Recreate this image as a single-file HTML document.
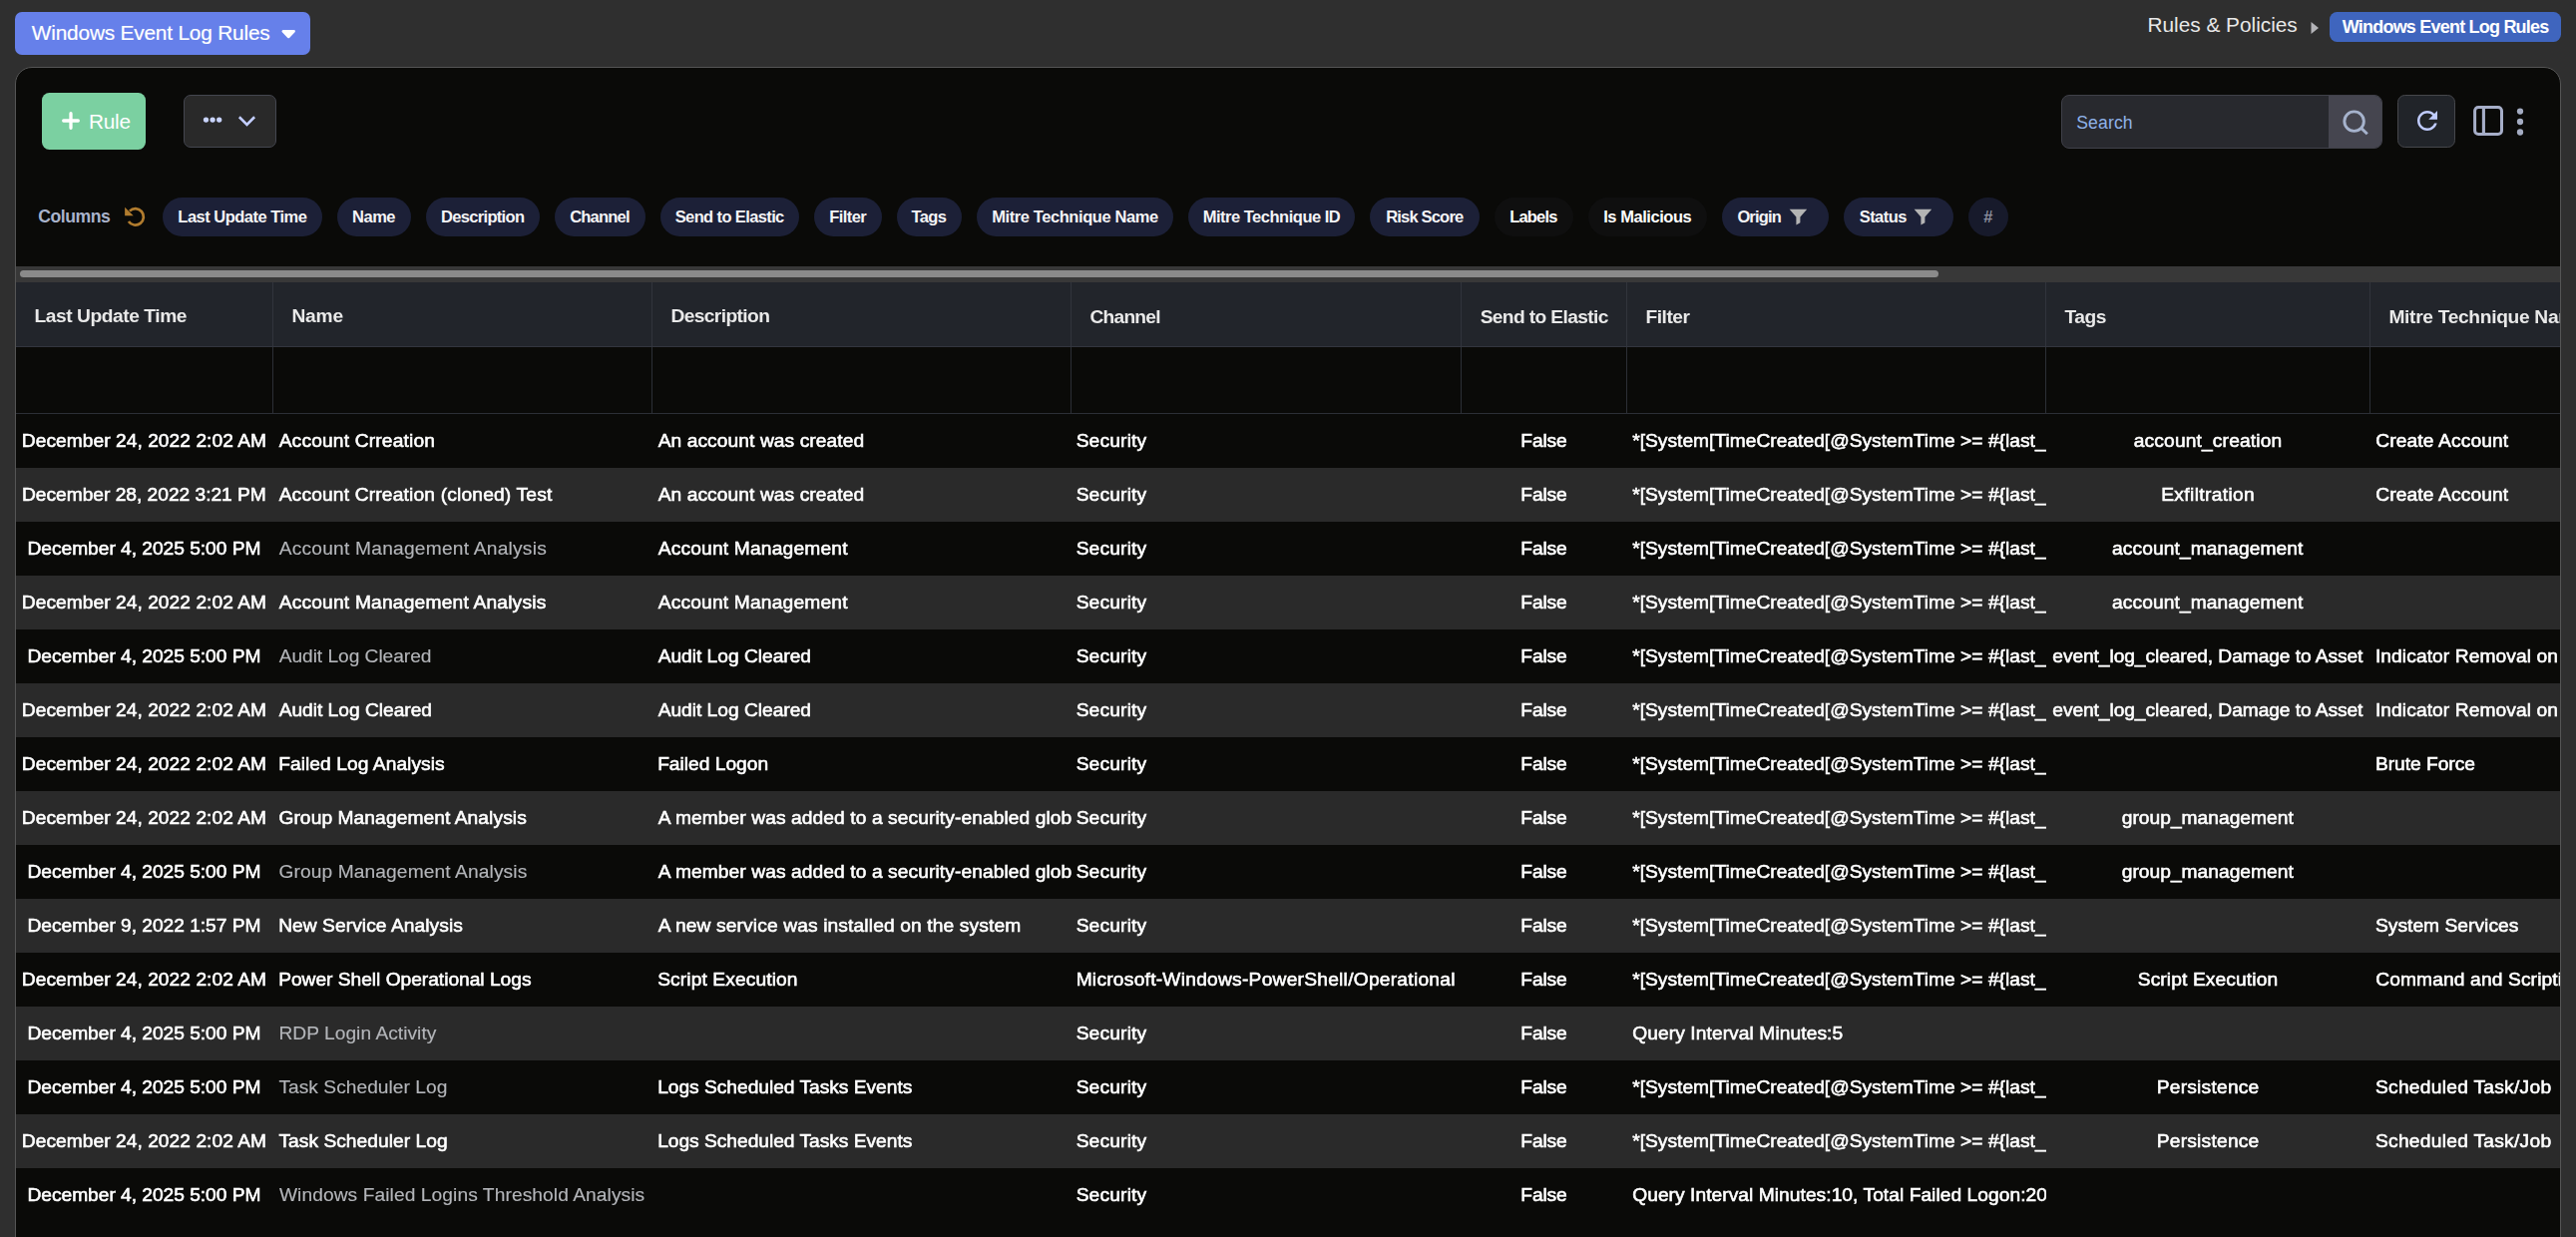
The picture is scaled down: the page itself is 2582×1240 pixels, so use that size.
<!DOCTYPE html><html lang='en'><head><meta charset='utf-8'><title>Windows Event Log Rules</title><style>
*{box-sizing:border-box;margin:0;padding:0}
html,body{width:2582px;height:1240px;overflow:hidden;background:#2f2f2f}
body{font-family:"Liberation Sans",sans-serif;color:#fff;position:relative;-webkit-font-smoothing:antialiased}
.abs{position:absolute}
.nw{white-space:pre}
.titlebtn{left:15px;top:12px;width:296px;height:43px;border-radius:7px;background:#6680ea;}
.titlebtn span{position:absolute;left:16.8px;top:-1.2px;line-height:43px;-webkit-text-stroke:0.2px #fff;font-size:20.8px;color:#fff}
.titlebtn svg{position:absolute;left:265.6px;top:16.4px}
.crumb{left:2154px;top:6px;height:38px;line-height:38px;font-size:20.8px;color:#e8e8e8}
.crumbsep{left:2316px;top:21px}
.badge{left:2335px;top:12px;width:232px;height:30px;border-radius:7.5px;background:#3f65be;font-weight:700;font-size:18px;line-height:30px;text-align:left;color:#fff;padding-top:0}
.card{left:15px;top:67px;width:2552px;height:1300px;border:1px solid #555;border-radius:17px;background:#0a0a08;overflow:hidden}
.rulebtn{left:26px;top:25px;width:104.3px;height:57.3px;border-radius:7.5px;background:#7bd0a1}
.rulebtn span{position:absolute;left:48.6px;top:0.4px;line-height:58px;font-size:20.8px;color:#fff}
.rulebtn svg{position:absolute;left:18.8px;top:18.1px}
.morebtn{left:168px;top:27px;width:93px;height:53px;border-radius:7px;background:#292929;border:1px solid #44464f}
.search{left:2050px;top:27px;width:322px;height:54px;border-radius:8px;background:#28292e;border:1px solid #404149;overflow:hidden}
.search span{position:absolute;left:15px;top:0;line-height:54px;font-size:17.6px;color:#8fb2e8}
.search .sbtn{position:absolute;right:-1px;top:-1px;width:54px;height:54px;background:#45454f}
.refresh{left:2387px;top:27px;width:58px;height:53px;border-radius:7.5px;background:#212429;border:1px solid #46474b}
.colslabel{left:23px;top:130px;height:39px;line-height:39px;font-size:17.6px;font-weight:700;color:#a9b3cb}
.chip{top:130px;height:39px;border-radius:20px;background:#1c2037;color:#f4f4f6;font-size:16.5px;font-weight:700;line-height:39px;padding-left:15.7px;white-space:pre}
.chip.off{background:#0f0f0f;color:#fff}
.chip.hash{background:#171a2b;color:#8b8e9d;padding-left:15.3px}
.sbtrack{left:0;top:199px;width:2550px;height:16px;background:#383838}
.sbthumb{left:4px;top:4px;width:1922.6px;height:7px;border-radius:4px;background:#8a8a8a}
.tbl{left:0;top:215px;width:2550px;height:1100px;overflow:hidden;will-change:transform}
.thead{left:0;top:0;height:65px;width:2700px;background:#22252b;display:flex;border-bottom:1px solid #33363e}
.th{height:64px;line-height:64px;padding-left:18.4px;font-size:19.2px;font-weight:700;color:#e9e9e9;border-right:1px solid #31343c;white-space:pre;overflow:hidden;flex:none}
.frow{left:0;top:65px;height:67px;width:2700px;display:flex;border-bottom:1px solid #2c2f36}
.fc{height:66px;border-right:1px solid #2c2f36;flex:none}
.tr{left:0;height:54px;width:2700px;display:flex}
.tr.alt{background:#2a2a2a}
.td{height:54px;line-height:54px;font-size:19.2px;padding:0 0 0 5.4px;white-space:pre;overflow:hidden;flex:none;color:#fff;-webkit-text-stroke:0.6px #fff}
.td.m{color:#b3b5b9;-webkit-text-stroke:0.15px #b3b5b9}
</style></head><body>
<div class='abs titlebtn'><span class='nw' style='left:16.80px;letter-spacing:-0.173px'>Windows Event Log Rules</span><svg width='17' height='12' viewBox='0 0 17 12'><path d='M2.7 3.3 L13.7 3.3 L8.2 9.1 Z' fill='#fff' stroke='#fff' stroke-width='2.4' stroke-linejoin='round'/></svg></div>
<div class='abs crumb nw' style='left:2152.45px;letter-spacing:0.003px'>Rules &amp; Policies</div>
<svg class='abs crumbsep' width='9' height='14' viewBox='0 0 9 14'><path d='M0.5 1 L8 7 L0.5 13 Z' fill='#b4b4b8'/></svg>
<div class='abs badge nw' style='padding-left:12.80px;letter-spacing:-0.791px'>Windows Event Log Rules</div>
<div class='abs card'>
<div class='abs rulebtn'><svg width='20' height='20' viewBox='0 0 20 20'><path d='M10 2.7v14.6M2.7 10h14.6' stroke='#fff' stroke-width='3.3' stroke-linecap='round' fill='none'/></svg><span class='nw' style='left:47.05px;letter-spacing:-0.267px'>Rule</span></div>
<div class='abs morebtn'><svg class='abs' style='left:0;top:0' width='91' height='51' viewBox='0 0 91 51'><circle cx='21.5' cy='24.1' r='2.65' fill='#c9d4ff'/><circle cx='28.1' cy='24.1' r='2.65' fill='#c9d4ff'/><circle cx='34.7' cy='24.1' r='2.65' fill='#c9d4ff'/><path d='M55.8 22.2 L62.5 28.9 L69.2 22.2' fill='none' stroke='#c3ceff' stroke-width='2.6' stroke-linecap='square' stroke-linejoin='miter'/></svg></div>
<div class='abs search'><span class='nw' style='left:14.25px;letter-spacing:0.13px'>Search</span><div class='sbtn'><svg class='abs' style='left:0;top:0' width='54' height='54' viewBox='0 0 54 54'><circle cx='25.6' cy='26.6' r='9.75' fill='none' stroke='#a6b3cd' stroke-width='2.9'/><path d='M32.6 33.4 L38.8 39.2' stroke='#a6b3cd' stroke-width='2.9' stroke-linecap='butt'/></svg></div></div>
<div class='abs refresh'><svg class='abs' style='left:13.7px;top:10.1px' width='30' height='30' viewBox='0 0 24 24'><path fill='#c0ccff' d='M17.65 6.35C16.2 4.9 14.21 4 12 4c-4.42 0-7.99 3.58-7.99 8s3.57 8 7.99 8c3.73 0 6.84-2.55 7.73-6h-2.08c-.82 2.33-3.04 4-5.65 4-3.31 0-6-2.69-6-6s2.69-6 6-6c1.66 0 3.14.69 4.22 1.78L13 11h7V4l-2.35 2.35z'/></svg></div>
<svg class='abs' style='left:2460px;top:36px' width='36' height='36' viewBox='0 0 36 36'><rect x='4.6' y='3.4' width='26.9' height='27.1' rx='3.6' fill='none' stroke='#a6aec8' stroke-width='3'/><path d='M13.4 3.4v27.1' stroke='#a6aec8' stroke-width='3.1'/></svg>
<svg class='abs' style='left:2504px;top:38px' width='12' height='34' viewBox='0 0 12 34'><circle cx='6' cy='5.6' r='3.15' fill='#a4acc2'/><circle cx='6' cy='16' r='3.15' fill='#a4acc2'/><circle cx='6' cy='26.5' r='3.15' fill='#a4acc2'/></svg>
<div class='abs colslabel nw' style='left:22.15px;letter-spacing:-0.442px'>Columns</div>
<svg class='abs' style='left:104px;top:133px' width='32' height='32' viewBox='0 0 32 32'><path d='M9.9 10.6 A8.2 8.2 0 1 1 8.9 21.0' fill='none' stroke='#b17c2e' stroke-width='2.7'/><path d='M5.1 6.7 V15.2 H13.7 Z' fill='#b17c2e'/></svg>
<div class='abs chip' style='left:147.0px;width:159.9px;padding-left:15.36px;letter-spacing:-0.517px'>Last Update Time</div>
<div class='abs chip' style='left:321.8px;width:73.9px;padding-left:15.29px;letter-spacing:-0.5px'>Name</div>
<div class='abs chip' style='left:411.0px;width:113.8px;padding-left:15.01px;letter-spacing:-0.675px'>Description</div>
<div class='abs chip' style='left:539.8px;width:91.0px;padding-left:15.38px;letter-spacing:-0.792px'>Channel</div>
<div class='abs chip' style='left:645.9px;width:139.1px;padding-left:14.85px;letter-spacing:-0.625px'>Send to Elastic</div>
<div class='abs chip' style='left:799.9px;width:68.1px;padding-left:15.46px;letter-spacing:-0.6px'>Filter</div>
<div class='abs chip' style='left:882.9px;width:64.8px;padding-left:14.53px;letter-spacing:-0.583px'>Tags</div>
<div class='abs chip' style='left:963.1px;width:196.8px;padding-left:15.18px;letter-spacing:-0.421px'>Mitre Technique Name</div>
<div class='abs chip' style='left:1175.0px;width:167.4px;padding-left:14.67px;letter-spacing:-0.485px'>Mitre Technique ID</div>
<div class='abs chip' style='left:1357.4px;width:109.3px;padding-left:15.76px;letter-spacing:-0.806px'>Risk Score</div>
<div class='abs chip off' style='left:1481.9px;width:78.7px;padding-left:15.29px;letter-spacing:-0.8px'>Labels</div>
<div class='abs chip off' style='left:1576.0px;width:118.8px;padding-left:15.22px;letter-spacing:-0.455px'>Is Malicious</div>
<div class='abs chip' style='left:1709.7px;width:107.3px;padding-left:15.70px;letter-spacing:-0.85px'>Origin<svg style='position:absolute;top:11px;left:67.4px' width='19' height='17' viewBox='0 0 19 17'><path d='M0.6 0.8 H18.2 L11.4 8.6 V14.2 L7.4 16.4 V8.6 Z' fill='#b4b4b4'/></svg></div>
<div class='abs chip' style='left:1832.0px;width:110.0px;padding-left:15.70px;letter-spacing:-0.55px'>Status<svg style='position:absolute;top:11px;left:70.1px' width='19' height='17' viewBox='0 0 19 17'><path d='M0.6 0.8 H18.2 L11.4 8.6 V14.2 L7.4 16.4 V8.6 Z' fill='#b4b4b4'/></svg></div>
<div class='abs chip hash' style='left:1956.9px;width:40.3px;letter-spacing:0'>#</div>
<div class='abs sbtrack'><div class='abs sbthumb'></div></div>
<div class='abs tbl'>
<div class='abs thead'>
<div class='th' style='width:258px;padding-top:1.7px;padding-left:18.40px;letter-spacing:-0.433px'>Last Update Time</div>
<div class='th' style='width:380px;padding-top:1.7px;padding-left:18.40px;letter-spacing:-0.167px'>Name</div>
<div class='th' style='width:420px;padding-top:1.7px;padding-left:18.40px;letter-spacing:-0.6px'>Description</div>
<div class='th' style='width:391px;padding-top:2.5px;padding-left:18.40px;letter-spacing:-0.75px'>Channel</div>
<div class='th' style='width:166px;padding-top:2.5px;padding-left:18.65px;letter-spacing:-0.625px'>Send to Elastic</div>
<div class='th' style='width:420px;padding-top:2.5px;padding-left:18.40px;letter-spacing:-0.45px'>Filter</div>
<div class='th' style='width:325px;padding-top:2.5px;padding-left:18.40px;letter-spacing:-0.417px'>Tags</div>
<div class='th' style='width:260px;padding-top:2.5px;padding-left:18.40px;letter-spacing:-0.316px'>Mitre Technique Name</div>
</div><div class='abs frow'>
<div class='fc' style='width:258px'></div>
<div class='fc' style='width:380px'></div>
<div class='fc' style='width:420px'></div>
<div class='fc' style='width:391px'></div>
<div class='fc' style='width:166px'></div>
<div class='fc' style='width:420px'></div>
<div class='fc' style='width:325px'></div>
<div class='fc' style='width:260px'></div>
</div>
<div class='abs tr' style='top:132px'>
<div class='td' style='width:258px;padding-left:5.78px;letter-spacing:0.042px'>December 24, 2022 2:02 AM</div>
<div class='td' style='width:380px;padding-left:5.65px;letter-spacing:0.172px'>Account Crreation</div>
<div class='td' style='width:420px;padding-left:5.65px;letter-spacing:0.083px'>An account was created</div>
<div class='td' style='width:391px;padding-left:4.65px;letter-spacing:0.179px'>Security</div>
<div class='td' style='width:166px;padding-left:59.32px;letter-spacing:-0.125px'>False</div>
<div class='td' style='width:420px;padding-left:5.20px;letter-spacing:0.018px'>*[System[TimeCreated[@SystemTime &gt;= #{last_</div>
<div class='td' style='width:325px;padding-left:87.80px;letter-spacing:0.15px'>account_creation</div>
<div class='td' style='width:260px;padding-left:5.20px;letter-spacing:0.135px'>Create Account</div>
</div>
<div class='abs tr alt' style='top:186px'>
<div class='td' style='width:258px;padding-left:6.02px;letter-spacing:-0.021px'>December 28, 2022 3:21 PM</div>
<div class='td' style='width:380px;padding-left:5.65px;letter-spacing:0.175px'>Account Crreation (cloned) Test</div>
<div class='td' style='width:420px;padding-left:5.65px;letter-spacing:0.083px'>An account was created</div>
<div class='td' style='width:391px;padding-left:4.65px;letter-spacing:0.179px'>Security</div>
<div class='td' style='width:166px;padding-left:59.32px;letter-spacing:-0.125px'>False</div>
<div class='td' style='width:420px;padding-left:5.20px;letter-spacing:0.018px'>*[System[TimeCreated[@SystemTime &gt;= #{last_</div>
<div class='td' style='width:325px;padding-left:115.21px;letter-spacing:0.364px'>Exfiltration</div>
<div class='td' style='width:260px;padding-left:5.20px;letter-spacing:0.135px'>Create Account</div>
</div>
<div class='abs tr' style='top:240px'>
<div class='td' style='width:258px;padding-left:11.51px;letter-spacing:-0.033px'>December 4, 2025 5:00 PM</div>
<div class='td m' style='width:380px;padding-left:5.65px;letter-spacing:0.221px'>Account Management Analysis</div>
<div class='td' style='width:420px;padding-left:5.65px;letter-spacing:0.191px'>Account Management</div>
<div class='td' style='width:391px;padding-left:4.65px;letter-spacing:0.179px'>Security</div>
<div class='td' style='width:166px;padding-left:59.32px;letter-spacing:-0.125px'>False</div>
<div class='td' style='width:420px;padding-left:5.20px;letter-spacing:0.018px'>*[System[TimeCreated[@SystemTime &gt;= #{last_</div>
<div class='td' style='width:325px;padding-left:66.09px;letter-spacing:0.088px'>account_management</div>
<div class='td' style='width:260px'></div>
</div>
<div class='abs tr alt' style='top:294px'>
<div class='td' style='width:258px;padding-left:5.78px;letter-spacing:0.042px'>December 24, 2022 2:02 AM</div>
<div class='td' style='width:380px;padding-left:5.65px;letter-spacing:0.202px'>Account Management Analysis</div>
<div class='td' style='width:420px;padding-left:5.65px;letter-spacing:0.191px'>Account Management</div>
<div class='td' style='width:391px;padding-left:4.65px;letter-spacing:0.179px'>Security</div>
<div class='td' style='width:166px;padding-left:59.32px;letter-spacing:-0.125px'>False</div>
<div class='td' style='width:420px;padding-left:5.20px;letter-spacing:0.018px'>*[System[TimeCreated[@SystemTime &gt;= #{last_</div>
<div class='td' style='width:325px;padding-left:66.09px;letter-spacing:0.088px'>account_management</div>
<div class='td' style='width:260px'></div>
</div>
<div class='abs tr' style='top:348px'>
<div class='td' style='width:258px;padding-left:11.51px;letter-spacing:-0.033px'>December 4, 2025 5:00 PM</div>
<div class='td m' style='width:380px;padding-left:5.65px;letter-spacing:-0.047px'>Audit Log Cleared</div>
<div class='td' style='width:420px;padding-left:5.65px;letter-spacing:-0.016px'>Audit Log Cleared</div>
<div class='td' style='width:391px;padding-left:4.65px;letter-spacing:0.179px'>Security</div>
<div class='td' style='width:166px;padding-left:59.32px;letter-spacing:-0.125px'>False</div>
<div class='td' style='width:420px;padding-left:5.20px;letter-spacing:0.018px'>*[System[TimeCreated[@SystemTime &gt;= #{last_</div>
<div class='td' style='width:325px;padding-left:6.32px;letter-spacing:-0.076px'>event_log_cleared, Damage to Asset</div>
<div class='td' style='width:260px;padding-left:4.95px;letter-spacing:0.083px'>Indicator Removal on Host</div>
</div>
<div class='abs tr alt' style='top:402px'>
<div class='td' style='width:258px;padding-left:5.78px;letter-spacing:0.042px'>December 24, 2022 2:02 AM</div>
<div class='td' style='width:380px;padding-left:5.65px;letter-spacing:-0.016px'>Audit Log Cleared</div>
<div class='td' style='width:420px;padding-left:5.65px;letter-spacing:-0.016px'>Audit Log Cleared</div>
<div class='td' style='width:391px;padding-left:4.65px;letter-spacing:0.179px'>Security</div>
<div class='td' style='width:166px;padding-left:59.32px;letter-spacing:-0.125px'>False</div>
<div class='td' style='width:420px;padding-left:5.20px;letter-spacing:0.018px'>*[System[TimeCreated[@SystemTime &gt;= #{last_</div>
<div class='td' style='width:325px;padding-left:6.32px;letter-spacing:-0.076px'>event_log_cleared, Damage to Asset</div>
<div class='td' style='width:260px;padding-left:4.95px;letter-spacing:0.083px'>Indicator Removal on Host</div>
</div>
<div class='abs tr' style='top:456px'>
<div class='td' style='width:258px;padding-left:5.78px;letter-spacing:0.042px'>December 24, 2022 2:02 AM</div>
<div class='td' style='width:380px;padding-left:5.15px;letter-spacing:0.069px'>Failed Log Analysis</div>
<div class='td' style='width:420px;padding-left:5.15px;letter-spacing:0.0px'>Failed Logon</div>
<div class='td' style='width:391px;padding-left:4.65px;letter-spacing:0.179px'>Security</div>
<div class='td' style='width:166px;padding-left:59.32px;letter-spacing:-0.125px'>False</div>
<div class='td' style='width:420px;padding-left:5.20px;letter-spacing:0.018px'>*[System[TimeCreated[@SystemTime &gt;= #{last_</div>
<div class='td' style='width:325px'></div>
<div class='td' style='width:260px;padding-left:4.95px;letter-spacing:-0.025px'>Brute Force</div>
</div>
<div class='abs tr alt' style='top:510px'>
<div class='td' style='width:258px;padding-left:5.78px;letter-spacing:0.042px'>December 24, 2022 2:02 AM</div>
<div class='td' style='width:380px;padding-left:5.40px;letter-spacing:0.083px'>Group Management Analysis</div>
<div class='td' style='width:420px;padding-left:5.65px;letter-spacing:0.091px'>A member was added to a security-enabled global group</div>
<div class='td' style='width:391px;padding-left:4.65px;letter-spacing:0.179px'>Security</div>
<div class='td' style='width:166px;padding-left:59.32px;letter-spacing:-0.125px'>False</div>
<div class='td' style='width:420px;padding-left:5.20px;letter-spacing:0.018px'>*[System[TimeCreated[@SystemTime &gt;= #{last_</div>
<div class='td' style='width:325px;padding-left:75.75px;letter-spacing:0.017px'>group_management</div>
<div class='td' style='width:260px'></div>
</div>
<div class='abs tr' style='top:564px'>
<div class='td' style='width:258px;padding-left:11.51px;letter-spacing:-0.033px'>December 4, 2025 5:00 PM</div>
<div class='td m' style='width:380px;padding-left:5.40px;letter-spacing:0.104px'>Group Management Analysis</div>
<div class='td' style='width:420px;padding-left:5.65px;letter-spacing:0.091px'>A member was added to a security-enabled global group</div>
<div class='td' style='width:391px;padding-left:4.65px;letter-spacing:0.179px'>Security</div>
<div class='td' style='width:166px;padding-left:59.32px;letter-spacing:-0.125px'>False</div>
<div class='td' style='width:420px;padding-left:5.20px;letter-spacing:0.018px'>*[System[TimeCreated[@SystemTime &gt;= #{last_</div>
<div class='td' style='width:325px;padding-left:75.75px;letter-spacing:0.017px'>group_management</div>
<div class='td' style='width:260px'></div>
</div>
<div class='abs tr alt' style='top:618px'>
<div class='td' style='width:258px;padding-left:11.51px;letter-spacing:-0.033px'>December 9, 2022 1:57 PM</div>
<div class='td' style='width:380px;padding-left:5.15px;letter-spacing:0.066px'>New Service Analysis</div>
<div class='td' style='width:420px;padding-left:5.65px;letter-spacing:0.131px'>A new service was installed on the system</div>
<div class='td' style='width:391px;padding-left:4.65px;letter-spacing:0.179px'>Security</div>
<div class='td' style='width:166px;padding-left:59.32px;letter-spacing:-0.125px'>False</div>
<div class='td' style='width:420px;padding-left:5.20px;letter-spacing:0.018px'>*[System[TimeCreated[@SystemTime &gt;= #{last_</div>
<div class='td' style='width:325px'></div>
<div class='td' style='width:260px;padding-left:4.95px;letter-spacing:0.036px'>System Services</div>
</div>
<div class='abs tr' style='top:672px'>
<div class='td' style='width:258px;padding-left:5.78px;letter-spacing:0.042px'>December 24, 2022 2:02 AM</div>
<div class='td' style='width:380px;padding-left:5.15px;letter-spacing:-0.019px'>Power Shell Operational Logs</div>
<div class='td' style='width:420px;padding-left:5.15px;letter-spacing:0.117px'>Script Execution</div>
<div class='td' style='width:391px;padding-left:4.65px;letter-spacing:0.25px'>Microsoft-Windows-PowerShell/Operational</div>
<div class='td' style='width:166px;padding-left:59.32px;letter-spacing:-0.125px'>False</div>
<div class='td' style='width:420px;padding-left:5.20px;letter-spacing:0.018px'>*[System[TimeCreated[@SystemTime &gt;= #{last_</div>
<div class='td' style='width:325px;padding-left:91.73px;letter-spacing:0.117px'>Script Execution</div>
<div class='td' style='width:260px;padding-left:5.20px;letter-spacing:0.133px'>Command and Scripting Interpreter</div>
</div>
<div class='abs tr alt' style='top:726px'>
<div class='td' style='width:258px;padding-left:11.51px;letter-spacing:-0.033px'>December 4, 2025 5:00 PM</div>
<div class='td m' style='width:380px;padding-left:5.40px;letter-spacing:0.029px'>RDP Login Activity</div>
<div class='td' style='width:420px'></div>
<div class='td' style='width:391px;padding-left:4.65px;letter-spacing:0.179px'>Security</div>
<div class='td' style='width:166px;padding-left:59.32px;letter-spacing:-0.125px'>False</div>
<div class='td' style='width:420px;padding-left:5.20px;letter-spacing:0.087px'>Query Interval Minutes:5</div>
<div class='td' style='width:325px'></div>
<div class='td' style='width:260px'></div>
</div>
<div class='abs tr' style='top:780px'>
<div class='td' style='width:258px;padding-left:11.51px;letter-spacing:-0.033px'>December 4, 2025 5:00 PM</div>
<div class='td m' style='width:380px;padding-left:5.40px;letter-spacing:0.029px'>Task Scheduler Log</div>
<div class='td' style='width:420px;padding-left:5.15px;letter-spacing:-0.019px'>Logs Scheduled Tasks Events</div>
<div class='td' style='width:391px;padding-left:4.65px;letter-spacing:0.179px'>Security</div>
<div class='td' style='width:166px;padding-left:59.32px;letter-spacing:-0.125px'>False</div>
<div class='td' style='width:420px;padding-left:5.20px;letter-spacing:0.018px'>*[System[TimeCreated[@SystemTime &gt;= #{last_</div>
<div class='td' style='width:325px;padding-left:110.77px;letter-spacing:0.225px'>Persistence</div>
<div class='td' style='width:260px;padding-left:4.95px;letter-spacing:0.279px'>Scheduled Task/Job</div>
</div>
<div class='abs tr alt' style='top:834px'>
<div class='td' style='width:258px;padding-left:5.78px;letter-spacing:0.042px'>December 24, 2022 2:02 AM</div>
<div class='td' style='width:380px;padding-left:5.40px;letter-spacing:0.044px'>Task Scheduler Log</div>
<div class='td' style='width:420px;padding-left:5.15px;letter-spacing:-0.019px'>Logs Scheduled Tasks Events</div>
<div class='td' style='width:391px;padding-left:4.65px;letter-spacing:0.179px'>Security</div>
<div class='td' style='width:166px;padding-left:59.32px;letter-spacing:-0.125px'>False</div>
<div class='td' style='width:420px;padding-left:5.20px;letter-spacing:0.018px'>*[System[TimeCreated[@SystemTime &gt;= #{last_</div>
<div class='td' style='width:325px;padding-left:110.77px;letter-spacing:0.225px'>Persistence</div>
<div class='td' style='width:260px;padding-left:4.95px;letter-spacing:0.279px'>Scheduled Task/Job</div>
</div>
<div class='abs tr' style='top:888px'>
<div class='td' style='width:258px;padding-left:11.51px;letter-spacing:-0.033px'>December 4, 2025 5:00 PM</div>
<div class='td m' style='width:380px;padding-left:5.90px;letter-spacing:0.077px'>Windows Failed Logins Threshold Analysis</div>
<div class='td' style='width:420px'></div>
<div class='td' style='width:391px;padding-left:4.65px;letter-spacing:0.179px'>Security</div>
<div class='td' style='width:166px;padding-left:59.32px;letter-spacing:-0.125px'>False</div>
<div class='td' style='width:420px;padding-left:5.20px;letter-spacing:0.048px'>Query Interval Minutes:10, Total Failed Logon:20</div>
<div class='td' style='width:325px'></div>
<div class='td' style='width:260px'></div>
</div>
</div>
</div></body></html>
